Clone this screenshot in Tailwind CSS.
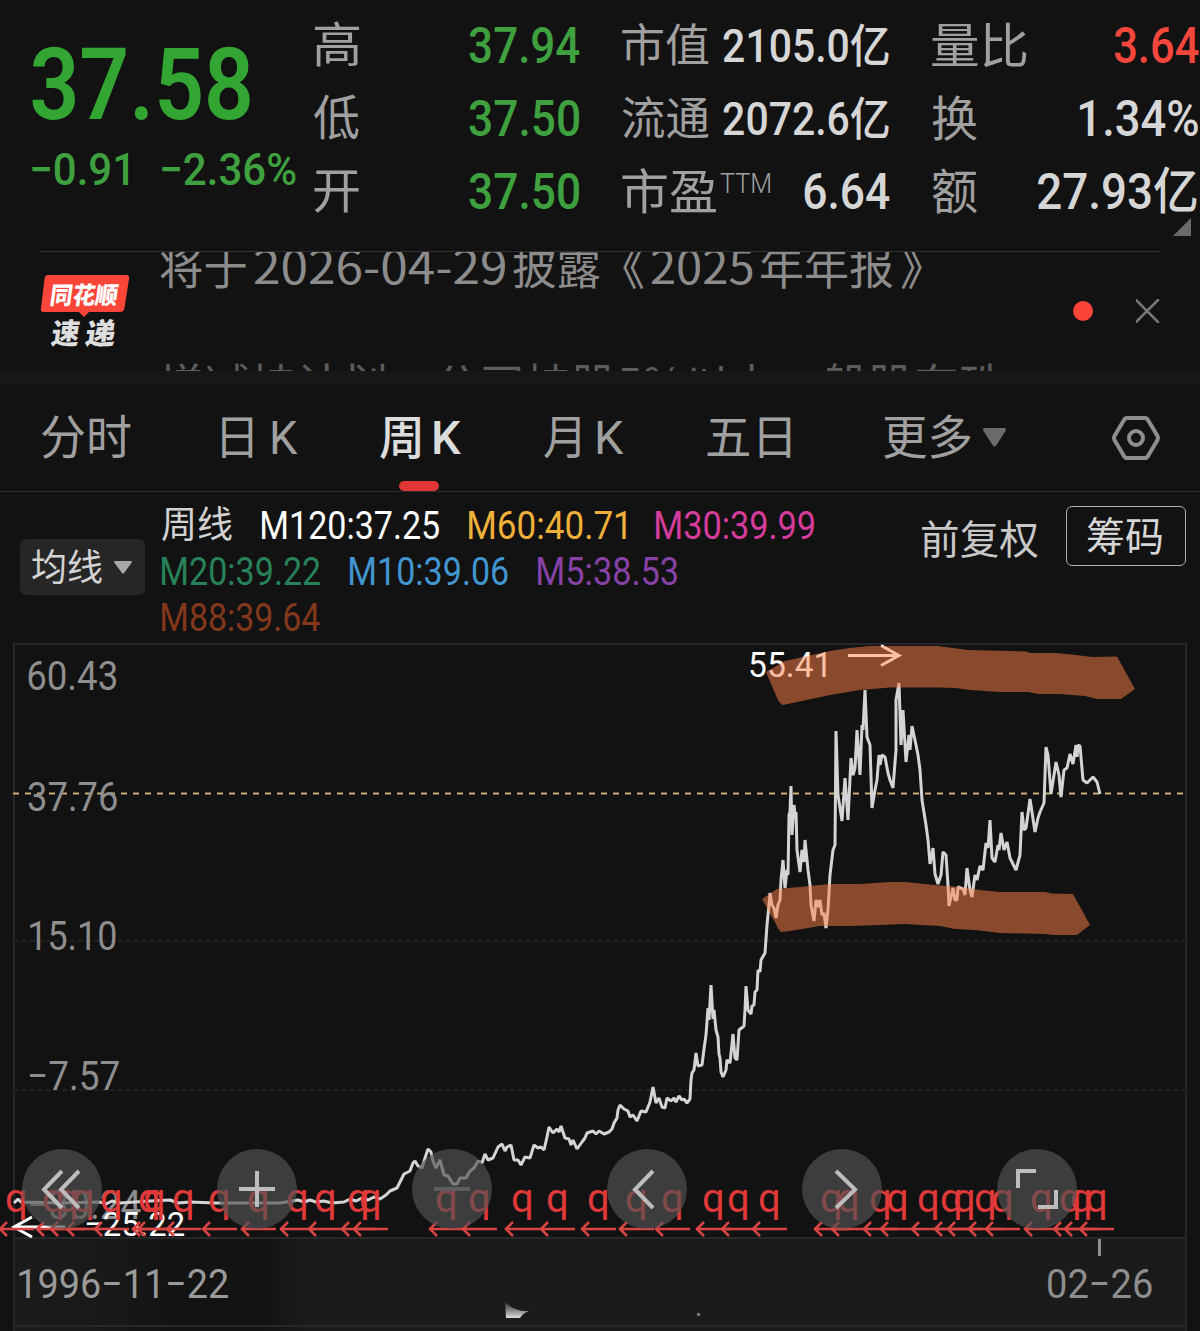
<!DOCTYPE html>
<html lang="zh-CN">
<head>
    <meta charset="UTF-8">
    <meta name="viewport" content="width=device-width, initial-scale=1.0">
    <title>周K</title>
    <script src="https://cdn.jsdelivr.net/npm/@tailwindcss/browser@4"></script>
</head>
<body class="w-[1200px] h-[1331px] overflow-hidden bg-[#121212] font-['Roboto','Noto_Sans_CJK_SC',sans-serif] text-[#a0a0a0] whitespace-nowrap">

    <!-- quote header -->
    <header class="flex h-[251px] relative overflow-hidden">
        <div class="w-[314px] shrink-0 pl-8 pt-[35px] text-[#33a532]">
            <div class="h-[100px] leading-[100px] text-[101px] font-semibold"><span class="inline-block origin-left" data-w="218">37.58</span></div>
            <div class="mt-[5px] flex h-[60px] leading-[60px] text-[45px] font-medium text-[#3fa03f]">
                <div class="w-[130px] shrink-0"><span class="inline-block origin-left" data-w="96">−0.91</span></div>
                <div><span class="inline-block origin-left" data-w="134">−2.36%</span></div>
            </div>
        </div>
        <div class="w-[155px] shrink-0 pt-[9px] text-[48px] leading-[73px]">
            <div><span class="inline-block origin-left" data-w="45">高</span></div>
            <div><span class="inline-block origin-left" data-w="45">低</span></div>
            <div><span class="inline-block origin-left" data-w="45">开</span></div>
        </div>
        <div class="w-[153px] shrink-0 pt-[10px] text-[50px] leading-[73px] font-medium text-[#3fa03f]">
            <div><span class="inline-block origin-left" data-w="111">37.94</span></div>
            <div><span class="inline-block origin-left" data-w="110">37.50</span></div>
            <div><span class="inline-block origin-left" data-w="110">37.50</span></div>
        </div>
        <div class="w-[310px] shrink-0 pt-[10px] text-[45px] leading-[73px]">
            <div class="flex">
                <div class="w-[101px] shrink-0"><span class="inline-block origin-left" data-w="87">市值</span></div>
                <div class="text-[46px] font-medium text-[#d6d6d6]"><span class="inline-block origin-left" data-w="166">2105.0亿</span></div>
            </div>
            <div class="flex">
                <div class="w-[101px] shrink-0"><span class="inline-block origin-left" data-w="87">流通</span></div>
                <div class="text-[46px] font-medium text-[#d6d6d6]"><span class="inline-block origin-left" data-w="166">2072.6亿</span></div>
            </div>
            <div class="flex">
                <div class="w-[98px] shrink-0 text-[48px]"><span class="inline-block origin-left" data-w="94">市盈</span></div>
                <div class="w-[84px] shrink-0 text-[27px] leading-[57px] font-light"><span class="inline-block origin-left" data-w="50">TTM</span></div>
                <div class="text-[50px] font-medium text-[#d6d6d6]"><span class="inline-block origin-left" data-w="86">6.64</span></div>
            </div>
        </div>
        <div class="w-[268px] shrink-0 pt-[10px] text-[48px] leading-[73px]">
            <div class="flex">
                <div class="w-[182px] shrink-0"><span class="inline-block origin-left" data-w="95">量比</span></div>
                <div class="text-[50px] font-medium text-[#f5473c]"><span class="inline-block origin-left" data-w="85">3.64</span></div>
            </div>
            <div class="flex">
                <div class="w-[148px] shrink-0"><span class="inline-block origin-left" data-w="45">换</span></div>
                <div class="text-[50px] font-medium text-[#d6d6d6]"><span class="inline-block origin-left" data-w="118">1.34%</span></div>
            </div>
            <div class="flex">
                <div class="w-[106px] shrink-0"><span class="inline-block origin-left" data-w="45">额</span></div>
                <div class="text-[50px] font-medium text-[#d6d6d6]"><span class="inline-block origin-left" data-w="159">27.93亿</span></div>
            </div>
        </div>
        <svg class="absolute left-[1173px] top-[218px]" width="18" height="18"><path d="M18 0V18H0Z" fill="#6b6b6b"/></svg>
    </header>

    <!-- news ticker -->
    <section class="flex h-[120px] mx-10 border-t border-[#303030] overflow-hidden">
        <div class="w-[120px] shrink-0 pt-[23px]">
            <svg width="90" height="76" viewBox="0 0 90 76">
                <path d="M8 0H86Q90 0 89 4L84.500 33Q84 37 80 37H49L44 42L39 37H4Q0 37 1 33L4.500 4Q5 0 8 0Z" fill="#fb4538"/>
                <g transform="skewX(-8)" class="font-black">
                    <text data-x="14" data-y="28.500" data-w="67" font-size="24" fill="#fff">同花顺</text>
                    <text data-x="20" data-y="69" data-w="28" font-size="29" fill="#dedede">速</text>
                    <text data-x="54" data-y="69" data-w="30" font-size="29" fill="#dedede">递</text>
                </g>
            </svg>
        </div>
        <div class="w-[860px] shrink-0 text-[46px] font-['Noto_Sans_CJK_SC',sans-serif]">
            <div class="flex h-[60px] leading-[60px] -mt-[18px] text-[#8c8c8c]">
                <div class="w-[94px] shrink-0"><span class="inline-block origin-left" data-w="86">将于</span></div>
                <div class="w-[259px] shrink-0"><span class="inline-block origin-left" data-w="252">2026-04-29</span></div>
                <div class="w-[110px] shrink-0"><span class="inline-block origin-left" data-w="87">披露</span></div>
                <div class="w-[28px] shrink-0"><span class="inline-block origin-left" data-w="21">《</span></div>
                <div class="w-[110px] shrink-0"><span class="inline-block origin-left" data-w="102">2025</span></div>
                <div class="w-[140px] shrink-0"><span class="inline-block origin-left" data-w="132">年年报</span></div>
                <span class="inline-block origin-left" data-w="21">》</span>
            </div>
            <div class="h-[60px] leading-[60px] mt-[58px] text-[#5c5c5c]"><span class="inline-block origin-left" data-w="845">增减持计划：公司持股5%以上一般股东珠</span></div>
        </div>
        <div class="flex items-center h-[118px] ml-[53px] gap-[43px]">
            <div class="size-5 rounded-full bg-[#fb4538]"></div>
            <svg width="24" height="24" viewBox="0 0 24 24" fill="none" stroke="#777" stroke-width="2.500" stroke-linecap="round"><path d="M0 1L22 23M22 1L0 23"/></svg>
        </div>
    </section>
    <div class="h-[13px] bg-[#171717]"></div>

    <!-- period tabs -->
    <nav class="relative flex h-[108px] pl-[42px] border-b border-[#2e2e2e] text-[47px] leading-[107px]">
        <div class="w-[180px]"><span class="inline-block origin-left" data-w="89">分时</span></div>
        <div class="w-[158px] flex"><div class="w-[50px]"><span class="inline-block origin-left" data-w="31">日</span></div><span class="inline-block origin-left" data-w="26">K</span></div>
        <div class="w-[164px] flex font-medium text-[#dcdcdc]"><div class="w-[54px]"><span class="inline-block origin-left" data-w="40">周</span></div><span class="inline-block origin-left" data-w="27">K</span></div>
        <div class="w-[163px] flex"><div class="w-[53px]"><span class="inline-block origin-left" data-w="36">月</span></div><span class="inline-block origin-left" data-w="27">K</span></div>
        <div class="w-[177px]"><span class="inline-block origin-left" data-w="84">五日</span></div>
        <div class="w-[99px]"><span class="inline-block origin-left" data-w="87">更多</span></div>
        <svg class="mt-[44px]" width="23" height="19"><path d="M2 0H21Q24 0 22.500 3L13.500 17Q11.500 20 9.500 17L.5 3Q-1 0 2 0Z" fill="#6b6b6b"/></svg>
        <svg class="mt-[30px] ml-[104px]" width="52" height="48" viewBox="0 0 52 48" fill="none" stroke="#8e8e8e" stroke-width="4">
            <path d="M17 4H35Q37 4 38 6L47.500 22Q48.500 24 47.500 26L38 42Q37 44 35 44H17Q15 44 14 42L4.500 26Q3.500 24 4.500 22L14 6Q15 4 17 4Z"/>
            <circle cx="26" cy="24" r="7"/>
        </svg>
        <div class="absolute left-[399px] top-[97px] w-[40px] h-[10px] rounded-full bg-[#e03636]"></div>
    </nav>

    <!-- moving averages -->
    <section class="flex h-[151px]">
        <button class="flex items-center mt-[47px] ml-5 w-[125px] h-[56px] pl-3 rounded-md bg-[#262626] text-[37px] leading-[56px] text-[#d2d2d2]">
            <div class="w-[82px] pt-1 text-left"><span class="inline-block origin-left" data-w="70">均线</span></div>
            <svg width="18" height="13"><path d="M1 0H17Q18.500 0 17.500 2L10 12Q9 13.500 8 12L.5 2Q-.5 0 1 0Z" fill="#a8a8a8"/></svg>
        </button>
        <div class="ml-[17px] mt-[11px] w-[760px] text-[38px] leading-[46px]">
            <div class="flex">
                <div class="w-[100px] text-[#d2d2d2] text-[37px]"><span class="inline-block origin-left" data-w="70">周线</span></div>
                <div class="w-[207px] text-white"><span class="inline-block origin-left" data-w="177">M120:37.25</span></div>
                <div class="w-[187px] text-[#efb03a]"><span class="inline-block origin-left" data-w="157">M60:40.71</span></div>
                <div class="text-[#d63c9c]"><span class="inline-block origin-left" data-w="158">M30:39.99</span></div>
            </div>
            <div class="flex">
                <div class="w-[188px] text-[#288259]"><span class="inline-block origin-left" data-w="158">M20:39.22</span></div>
                <div class="w-[188px] text-[#4296d0]"><span class="inline-block origin-left" data-w="158">M10:39.06</span></div>
                <div class="text-[#8742a6]"><span class="inline-block origin-left" data-w="139">M5:38.53</span></div>
            </div>
            <div class="text-[#84381b]"><span class="inline-block origin-left" data-w="158">M88:39.64</span></div>
        </div>
        <div class="w-[144px] mt-[19px] leading-[60px] text-[40px] text-[#c8c8c8]"><span class="inline-block origin-left" data-w="116">前复权</span></div>
        <button class="mt-[14px] w-[120px] h-[60px] pl-5 pt-px border border-[#b0b0b0] rounded-md text-left text-[40px] leading-[60px] text-[#d6d6d6]"><span class="inline-block origin-left" data-w="75">筹码</span></button>
    </section>

    <!-- chart -->
    <section class="relative">
        <svg class="block" width="1200" height="688" viewBox="0 643 1200 688">
            <defs>
                <linearGradient id="axisFade" x1="14" x2="310" y1="0" y2="0" gradientUnits="userSpaceOnUse">
                    <stop offset="0" stop-color="#1b1b1b"/>
                    <stop offset=".25" stop-color="#191919"/>
                    <stop offset=".6" stop-color="#131313"/>
                    <stop offset=".84" stop-color="#131313"/>
                    <stop offset="1" stop-color="#1b1b1b"/>
                </linearGradient>
                <linearGradient id="glow" x1="0" x2="0" y1="0" y2="1">
                    <stop offset="0" stop-color="#222"/>
                    <stop offset="1" stop-color="#ddd"/>
                </linearGradient>
            </defs>
            <rect x="14" y="1238" width="1172" height="93" fill="url(#axisFade)"/>
            <g fill="none" stroke="#272727" stroke-width="2">
                <path d="M14 1331V644H1186V1331M14 1238H1186M14 1326H1186"/>
                <path d="M14 941H1186M14 1090H1186" stroke-width="1.500" stroke-dasharray="5 3"/>
            </g>
            <path d="M13 793.500H1186" stroke="#c6ae74" stroke-width="2" stroke-dasharray="6 6"/>

            <g fill="#8e8e8e" font-size="40">
                <text data-x="28" data-y="690" data-w="88">60.43</text>
                <text data-x="28" data-y="811" data-w="89">37.76</text>
                <text data-x="30" data-y="950" data-w="86">15.10</text>
                <text data-x="30" data-y="1090" data-w="89">−7.57</text>
                <text data-x="30" data-y="1219" data-w="111">−30.24</text>
                <text data-x="19" data-y="1298" data-w="209" fill="#9a9a9a">1996−11−22</text>
                <text data-x="1048" data-y="1298" data-w="104">02−26</text>
            </g>
            <path d="M1099.500 1239V1256" stroke="#8e8e8e" stroke-width="3"/>

            <path fill="none" stroke="#d4d4d4" stroke-width="3" stroke-linejoin="bevel" d="M14 1203L18 1199L21 1202L60 1203L100 1202L106 1204L112 1201L120 1203L150 1201L170 1200L178 1203L190 1202L215 1203L280 1203L298 1200L304 1202L310 1200L316 1202L324 1201L332 1203L344 1202L350 1199L356 1201L362 1198L368 1200L374 1197L380 1199L386 1195L390 1191L397 1188L401 1180L404 1174L410 1171L413 1163L415 1161L418 1166L422 1168L425 1158L428 1149L431 1152L433 1161L436 1168L440 1160L444 1175L448 1176L453 1184L457 1184L460 1178L466 1178L470 1171L474 1168L478 1161L482 1163L485 1154L488 1160L493 1158L498 1147L502 1144L505 1151L507 1147L511 1145L514 1160L518 1160L521 1165L525 1157L530 1158L534 1145L538 1148L541 1147L544 1150L547 1137L549 1127L553 1133L557 1129L559 1132L561 1126L565 1138L569 1139L571 1145L573 1140L577 1149L582 1142L585 1138L587 1133L593 1131L596 1134L599 1131L604 1134L609 1132L612 1129L614 1123L617 1118L618 1110L620 1105L624 1109L628 1111L630 1117L633 1115L637 1121L641 1111L646 1112L650 1102L653 1087L656 1103L659 1098L662 1107L665 1108L667 1098L671 1101L674 1098L676 1102L679 1096L682 1100L684 1099L687 1103L690 1099L691 1080L692 1073L694 1070L696 1053L698 1066L702 1065L704 1049L706 1035L708 1008L709 1020L711 985L713 1019L714 1010L716 1030L718 1037L719 1054L720 1058L721 1072L723 1077L726 1070L727 1060L730 1063L733 1034L735 1058L737 1060L739 1030L744 1026L745 1010L746 986L748 1010L751 1014L752 1006L754 1005L755 992L757 990L758 970L760 972L761 960L765 953L767 925L769 905L770 893L772 905L774 908L776 918L778 905L780 900L781 880L783 860L785 888L787 870L788 875L789 815L790 812L791 786L792 835L794 805L795 815L796 812L797 850L800 872L802 850L804 862L805 840L808 870L810 885L811 905L814 921L816 900L818 907L820 900L822 915L824 913L826 928L828 910L830 875L833 850L835 845L836 731L838 795L842 821L845 778L848 820L851 758L853 775L855 768L857 730L860 775L862 725L863 730L865 690L867 737L870 745L872 808L875 790L877 780L879 755L880 765L882 755L885 757L888 773L890 780L893 788L896 750L896 700L899 683L901 745L903 710L906 762L909 735L910 750L912 726L916 745L918 755L920 770L922 800L926 825L928 840L930 864L933 848L935 874L938 884L941 875L943 852L946 855L948 885L949 906L953 888L955 900L957 900L958 887L963 889L965 895L967 868L970 890L972 897L975 875L977 880L980 866L983 870L986 843L988 848L990 820L992 858L995 862L998 845L999 850L1001 833L1004 850L1007 842L1010 858L1016 870L1020 855L1022 812L1024 830L1026 828L1030 799L1035 832L1038 818L1040 812L1044 803L1046 747L1048 755L1051 794L1054 775L1056 762L1059 775L1061 797L1064 770L1067 768L1070 754L1073 764L1076 745L1077 757L1078 745L1080 746L1083 780L1087 783L1093 777L1097 782L1100 794"/>

            <g fill="none" stroke="#fff" stroke-width="3">
                <path d="M848 655.500H899M881 645.500L899 655.500L881 665.500"/>
                <path d="M65 1227H14M32 1217L14 1227L32 1237"/>
            </g>
            <text data-x="750" data-y="677" data-w="76" font-size="35" fill="#fff">55.41</text>
            <text data-x="86" data-y="1236" data-w="98" font-size="34" fill="#fff">−25.22</text>

            <!-- marker strokes -->
            <g fill="#ff8047" fill-opacity=".5">
                <path d="M766 672L785 661L830 651L850 648L870 646L938 646L968 650L1010 651L1026 651.500L1030 653L1056 653L1076 655L1092 657L1117 656.500L1135 689L1121 699L1097 699L1085 696L1060 694L1038 694L1028 692L1000 692L970 690L955 688L940 687.500L890 687.500L860 690L830 695L783 705Q780 704 777 698Z"/>
                <path d="M762 899L777 889L800 887L830 884L860 884L890 882L905 882L935 885L960 887L980 890L1000 892L1045 892L1052 893.500L1073 894L1090 925L1077 935L1054 935L1045 934L1000 933L975 930L955 929L940 926L920 925L905 924L880 925L850 926L820 926L790 931L781 932Q777 928 776 924Z"/>
            </g>

            <!-- dividend marks -->
            <g id="marks" fill="#e0393a" font-size="40"></g>
        </svg>
        <svg class="absolute left-[505px] top-[658px]" width="26" height="18"><path d="M0 0Q8 11 24 10Q18 12 15 17H1Z" fill="url(#glow)"/></svg>
        <div class="absolute left-[697px] top-[670px] size-[3px] bg-[#777]"></div>

        <div class="absolute left-[22px] top-[506px] flex gap-[115px]">
            <button class="size-20 rounded-full bg-[#545454]/67"><svg width="80" height="80" fill="none" stroke="#bdbdbd" stroke-width="4"><path d="M40 22L22 40.500L40 59M57 22L39 40.500L57 59"/></svg></button>
            <button class="size-20 rounded-full bg-[#545454]/67"><svg width="80" height="80" fill="none" stroke="#bdbdbd" stroke-width="4"><path d="M22 40H58M40 22V58"/></svg></button>
            <button class="size-20 rounded-full bg-[#545454]/67"><svg width="80" height="80" fill="none" stroke="#5e5e5e" stroke-width="4"><path d="M22 40H58"/></svg></button>
            <button class="size-20 rounded-full bg-[#545454]/67"><svg width="80" height="80" fill="none" stroke="#bdbdbd" stroke-width="4"><path d="M46 22L28 40.500L46 59"/></svg></button>
            <button class="size-20 rounded-full bg-[#545454]/67"><svg width="80" height="80" fill="none" stroke="#bdbdbd" stroke-width="4"><path d="M34 22L53 40.500L34 59"/></svg></button>
            <button class="size-20 rounded-full bg-[#545454]/67"><svg width="80" height="80" fill="none" stroke="#bdbdbd" stroke-width="4"><path d="M21 39V22H39M59 41V58H41"/></svg></button>
        </div>
    </section>

    <script>
        // x of every dividend arrow tip
        const marks = [-1, 36, 50, 66, 94, 132, 137, 166, 202, 241, 280, 308, 341, 353,
            429, 462, 505, 540, 581, 619, 655, 696, 721, 752,
            814, 831, 863, 880, 911, 934, 947, 968, 985, 1024, 1053, 1064, 1079];

        document.getElementById('marks').innerHTML = marks.map(x => `
            <text data-x="${x + 7}" data-y="1212" data-w="19">q</text>
            <path d="M${x} 1229H${x + 35}M${x + 8} 1222L${x + 1} 1229L${x + 8} 1236" fill="none" stroke="#d94543" stroke-width="2.5"/>`).join('');

        // squeeze each label to its data-w, measured on the ink of the glyphs
        const ctx = document.createElement('canvas').getContext('2d');
        function fitLabels() {
            document.querySelectorAll('[data-w]').forEach(el => {
                const cs = getComputedStyle(el);
                ctx.font = `${cs.fontWeight} ${cs.fontSize} ${cs.fontFamily}`;
                const m = ctx.measureText(el.textContent);
                const left = -m.actualBoundingBoxLeft;
                const s = el.dataset.w / (m.actualBoundingBoxRight - left);
                if (el.dataset.x) {
                    el.setAttribute('transform', `translate(${el.dataset.x - left * s} ${el.dataset.y}) scale(${s} 1)`);
                } else {
                    el.style.transform = `translateX(${-left * s}px) scaleX(${s})`;
                }
            });
        }
        fitLabels();
        window.addEventListener('load', fitLabels);

        // the stylesheet can land after load, labels change size then
        const observer = new ResizeObserver(fitLabels);
        observer.observe(document.body);
        document.querySelectorAll('span[data-w]').forEach(el => observer.observe(el));
    </script>
</body>
</html>
